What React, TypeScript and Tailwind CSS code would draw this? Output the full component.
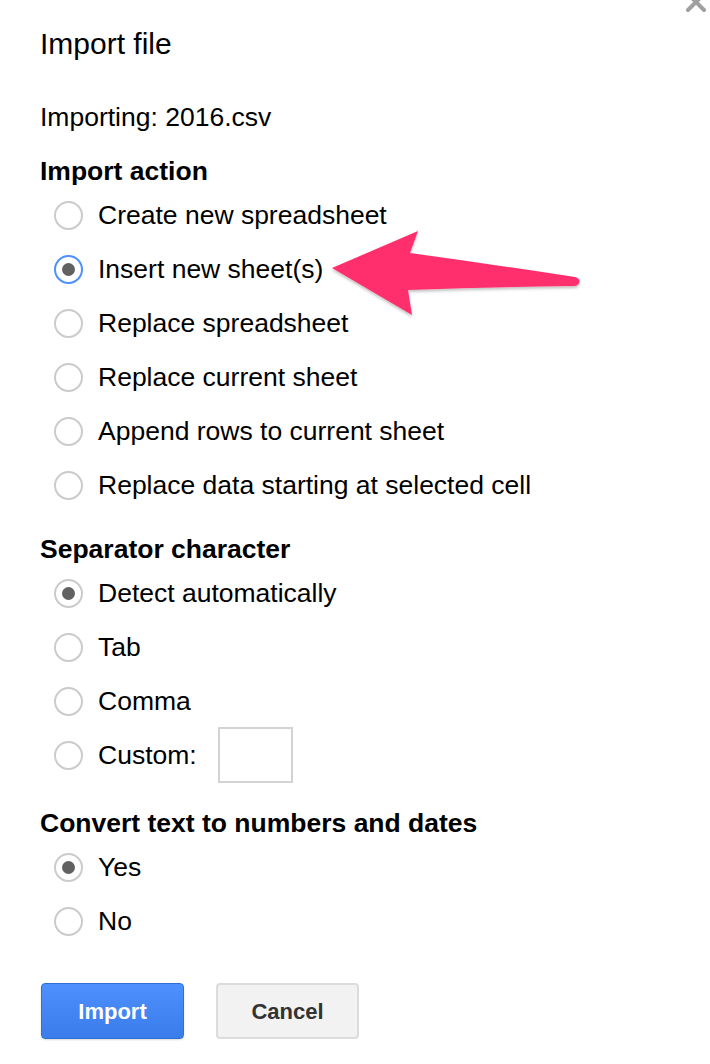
const importActions = [
  "Create new spreadsheet",
  "Insert new sheet(s)",
  "Replace spreadsheet",
  "Replace current sheet",
  "Append rows to current sheet",
  "Replace data starting at selected cell",
];

function Radio({ checked, focused }: { checked?: boolean; focused?: boolean }) {
  return (
    <span
      className={
        "flex h-[29px] w-[29px] shrink-0 items-center justify-center rounded-full border-2 bg-white " +
        (focused ? "border-[#4d90fe]" : "border-[#cbcbcb]")
      }
    >
      {checked && <span className="h-[13px] w-[13px] rounded-full bg-[#616161]" />}
    </span>
  );
}

function Option({
  label,
  checked,
  focused,
  children,
}: {
  label: string;
  checked?: boolean;
  focused?: boolean;
  children?: React.ReactNode;
}) {
  return (
    <label className="flex h-[54px] items-center pl-[14px]">
      <Radio checked={checked} focused={focused} />
      <span className="ml-[15px] pt-[2px] text-[26.5px] text-black">{label}</span>
      {children}
    </label>
  );
}

function SectionTitle({ children, className = "" }: { children: string; className?: string }) {
  return (
    <div className={"flex h-[34px] items-center pt-[2px] text-[26.5px] font-bold text-black " + className}>
      {children}
    </div>
  );
}

function Arrow() {
  return (
    <svg className="absolute left-0 top-0" width="710" height="400" viewBox="0 0 710 400">
      <defs>
        <filter id="sh" x="-10%" y="-20%" width="120%" height="150%">
          <feDropShadow dx="0" dy="2" stdDeviation="1.5" floodColor="#000" floodOpacity="0.25" />
        </filter>
      </defs>
      <path
        d="M332 268 L418 231 L410 253 Q490 264 575 277 Q581 279 579 283 Q578 286 574 286 Q490 287 408 290 L412 315 Z"
        fill="#ff2f6d"
        filter="url(#sh)"
      />
    </svg>
  );
}

export default function App() {
  return (
    <div
      className="relative h-[1064px] w-[710px] overflow-hidden bg-white text-black"
      style={{ fontFamily: '"Liberation Sans", Arial, sans-serif' }}
    >
      {/* close button, cut off by the crop */}
      <svg className="absolute right-0 top-[-8px]" width="26" height="24" viewBox="0 0 26 24">
        <path d="M4 2 L20 18 M20 2 L4 18" stroke="#a0a0a0" strokeWidth="4" strokeLinecap="round" />
      </svg>

      <div className="pl-[40px]">
        <h1 className="flex h-[86px] items-center pt-[1px] text-[30px] font-normal">Import file</h1>
        <div className="flex h-[62px] items-center pt-[2px] text-[26.5px]">Importing: 2016.csv</div>

        <SectionTitle className="mt-[6px]">Import action</SectionTitle>
        {importActions.map((a, i) => (
          <Option key={a} label={a} checked={i === 1} focused={i === 1} />
        ))}

        <SectionTitle className="mt-[20px]">Separator character</SectionTitle>
        <Option label="Detect automatically" checked />
        <Option label="Tab" />
        <Option label="Comma" />
        <Option label="Custom:">
          <input
            type="text"
            className="ml-[21px] h-[56px] w-[75px] border-2 border-[#d3d3d3] bg-white outline-none"
          />
        </Option>

        <SectionTitle className="mt-[24px]">Convert text to numbers and dates</SectionTitle>
        <Option label="Yes" checked />
        <Option label="No" />

        <div className="ml-[1px] mt-[35px] flex gap-[32px]">
          <button className="h-[56px] w-[143px] rounded-[4px] border border-[#2f6fd8] bg-gradient-to-b from-[#4d90fe] to-[#3a7ce9] pt-[1px] text-[22px] font-bold text-white shadow-[0_1px_2px_rgba(0,0,0,0.15)]">
            Import
          </button>
          <button className="h-[56px] w-[143px] rounded-[4px] border-2 border-[#dcdcdc] bg-[#f2f2f2] pt-[1px] text-[22px] font-bold text-[#333]">
            Cancel
          </button>
        </div>
      </div>

      <Arrow />
    </div>
  );
}
